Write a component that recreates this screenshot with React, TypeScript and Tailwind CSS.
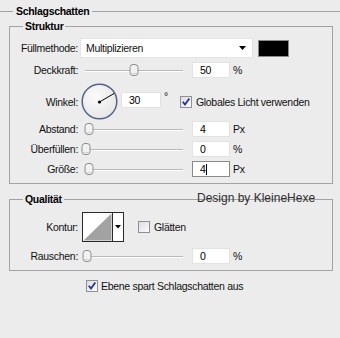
import React from 'react';

const LABEL = 'w-[68px] shrink-0 text-right';

function Slider({ pos }: { pos: number }) {
  // track runs from x=5 to x=103 inside the svg
  return (
    <svg width="106" height="16" viewBox="0 0 106 16" className="shrink-0">
      <line x1="5" y1="8.5" x2="103" y2="8.5" stroke="#b9b9b9" />
      <line x1="5" y1="9.5" x2="103" y2="9.5" stroke="#ffffff" />
      <rect x={pos - 4} y="2.5" width="8" height="11" rx="3" fill="#f1f1f1" stroke="#8e8e8e" />
      <line x1={pos - 2.5} y1="11.5" x2={pos + 2.5} y2="11.5" stroke="#d2d2d2" />
    </svg>
  );
}

function Field({ value, focused = false, w = 'w-[38px]' }: { value: string; focused?: boolean; w?: string }) {
  return (
    <div
      className={`${w} h-[16px] shrink-0 bg-white border flex items-center pl-[7px] text-black ${
        focused ? 'border-[#8a8a8a]' : 'border-[#e2e2e2]'
      }`}
    >
      {value}
      {focused && <span className="w-px h-[11px] bg-black" />}
    </div>
  );
}

function Check({ on }: { on: boolean }) {
  return (
    <svg width="12" height="12" viewBox="0 0 12 12" className="shrink-0">
      <defs>
        <linearGradient id={on ? 'cbOn' : 'cbOff'} x1="0" y1="0" x2="1" y2="1">
          <stop offset="0" stopColor="#d9dadf" />
          <stop offset="1" stopColor="#ffffff" />
        </linearGradient>
      </defs>
      <rect x="0.5" y="0.5" width="11" height="11" fill={`url(#${on ? 'cbOn' : 'cbOff'})`} stroke="#8f8f95" />
      {on && <path d="M2.8 5.8 L5 8.6 L9.3 2.6" fill="none" stroke="#27348f" strokeWidth="1.8" />}
    </svg>
  );
}

function Row({ label, children, className = '' }: { label: string; children: React.ReactNode; className?: string }) {
  return (
    <div className={`flex items-center h-[16px] ${className}`}>
      <div className={LABEL}>{label}</div>
      {children}
    </div>
  );
}

function SliderRow({ label, pos, value, unit, focused, className }: { label: string; pos: number; value: string; unit: string; focused?: boolean; className?: string }) {
  return (
    <Row label={label} className={className}>
      <div className="ml-[2px]">
        <Slider pos={pos} />
      </div>
      <div className="ml-[6px]">
        <Field value={value} focused={focused} />
      </div>
      <span className="ml-[3px]">{unit}</span>
    </Row>
  );
}

export default function App() {
  return (
    <div className="relative w-[340px] h-[338px] overflow-hidden bg-[#ececec] text-[10.5px] tracking-[-0.3px] leading-[14px] text-[#111] font-['Liberation_Sans',Arial,sans-serif]">
      <fieldset className="mt-[4px] border-t border-[#a3a3a3] pl-[9px] pr-[7px]">
        <legend className="ml-[4px] px-[3px] font-bold text-black">Schlagschatten</legend>

        {/* Struktur */}
        <fieldset className="mt-[1px] border border-[#a3a3a3] pt-[5px] pb-[6px]">
          <legend className="ml-[13px] px-[2px] font-bold text-black">Struktur</legend>

          <div className="flex items-center h-[20px]">
            <div className={LABEL}>Füllmethode:</div>
            <div className="ml-[2px] w-[173px] h-[20px] bg-white border border-[#e4e4e4] flex items-center justify-between pl-[5px] pr-[6px]">
              <span>Multiplizieren</span>
              <svg width="7" height="4" viewBox="0 0 7 4">
                <path d="M0 0 H7 L3.5 4 Z" fill="#000" />
              </svg>
            </div>
            <div className="ml-[5px] w-[31px] h-[17px] bg-black border border-[#8a8a8a]" />
          </div>

          <SliderRow label="Deckkraft:" pos={54} value="50" unit="%" className="mt-[4px]" />

          <div className="mt-[5px] flex items-center h-[37px]">
            <div className={LABEL}>Winkel:</div>
            <svg width="37" height="37" viewBox="0 0 37 37" className="ml-[3px] shrink-0">
              <defs>
                <radialGradient id="dial" cx="0.4" cy="0.35" r="0.7">
                  <stop offset="0" stopColor="#fbfbfb" />
                  <stop offset="1" stopColor="#e6e6e6" />
                </radialGradient>
              </defs>
              <circle cx="18.5" cy="18.5" r="17.3" fill="url(#dial)" stroke="#56628a" strokeWidth="1.5" />
              <line x1="18.5" y1="19" x2="33" y2="10.5" stroke="#000" strokeWidth="1" />
              <circle cx="18.5" cy="19" r="1.6" fill="#000" />
            </svg>
            <div className="self-start mt-[9px] ml-[3px] flex items-start">
              <Field value="30" w="w-[40px]" />
              <span className="ml-[3px] -mt-[3px]">°</span>
            </div>
            <div className="ml-[12px] flex items-center gap-[4px]">
              <Check on />
              <span>Globales Licht verwenden</span>
            </div>
          </div>

          <SliderRow label="Abstand:" pos={9} value="4" unit="Px" className="mt-[1px]" />
          <SliderRow label="Überfüllen:" pos={6} value="0" unit="%" className="mt-[4px]" />
          <SliderRow label="Größe:" pos={9} value="4" unit="Px" focused className="mt-[4px]" />
        </fieldset>

        {/* Qualität */}
        <fieldset className="mt-[8px] border border-[#a3a3a3] pt-[6px] pb-[6px]">
          <legend className="ml-[13px] px-[2px] font-bold text-black">Qualität</legend>

          <div className="flex items-center h-[30px]">
            <div className={LABEL}>Kontur:</div>
            <svg width="42" height="30" viewBox="0 0 42 30" className="ml-[4px] shrink-0">
              <rect x="0.5" y="0.5" width="41" height="29" fill="#fff" stroke="#2a2a2a" />
              <polygon points="1.5,28.5 29.5,1.5 29.5,28.5" fill="#a2a2a2" />
              <line x1="30.5" y1="1" x2="30.5" y2="29" stroke="#2a2a2a" />
              <path d="M33 13 H39 L36 16.5 Z" fill="#000" />
            </svg>
            <div className="ml-[14px] flex items-center gap-[4px]">
              <Check on={false} />
              <span>Glätten</span>
            </div>
          </div>

          <SliderRow label="Rauschen:" pos={7} value="0" unit="%" className="mt-[6px]" />
        </fieldset>

        <div className="mt-[8px] pl-[77px] flex items-center gap-[3px] h-[14px]">
          <Check on />
          <span>Ebene spart Schlagschatten aus</span>
        </div>
      </fieldset>

      {/* watermark over the Qualität frame */}
      <div className="absolute left-[197px] top-[191px] text-[12px] tracking-normal leading-[14px] text-[#2e2e2e]">
        Design by KleineHexe
      </div>
    </div>
  );
}
